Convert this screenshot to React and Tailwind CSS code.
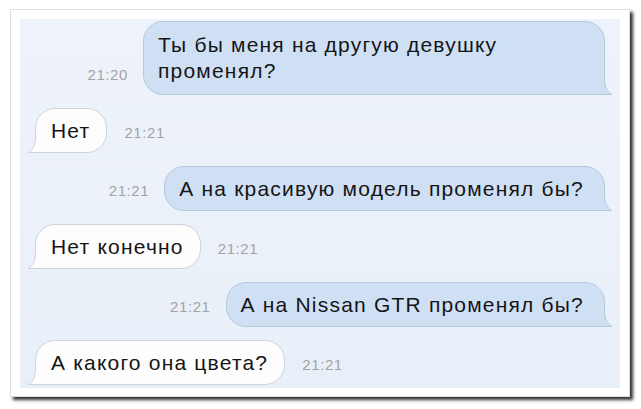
import React from 'react';

const messages = [
  { out: true, time: '21:20', lines: ['Ты бы меня на другую девушку', 'променял?'] },
  { out: false, time: '21:21', lines: ['Нет'] },
  { out: true, time: '21:21', lines: ['А на красивую модель променял бы?'] },
  { out: false, time: '21:21', lines: ['Нет конечно'] },
  { out: true, time: '21:21', lines: ['А на Nissan GTR променял бы?'] },
  { out: false, time: '21:21', lines: ['А какого она цвета?'] },
];

const Tail = ({ out }) =>
  out ? (
    <svg className="absolute -right-[9px] -bottom-px" width="16" height="16" viewBox="0 0 16 16">
      <path d="M0,0 H7.5 C7.5,8 10,13 15,15.5 H0 Z" fill="#cfe0f5" />
      <path d="M7.5,0 C7.5,8 10,13 15,15.5 H0" fill="none" stroke="#b6c8dd" />
    </svg>
  ) : (
    <svg className="absolute -left-[9px] -bottom-px" width="16" height="16" viewBox="0 0 16 16">
      <path d="M16,0 H8.5 C8.5,8 6,13 1,15.5 H16 Z" fill="#fdfdfd" />
      <path d="M8.5,0 C8.5,8 6,13 1,15.5 H16" fill="none" stroke="#cdd4dc" />
    </svg>
  );

const Bubble = ({ out, lines }) => {
  const multi = lines.length > 1;
  return (
    <div
      className={
        out
          ? `relative rounded-[20px] rounded-br-none border border-[#b6c8dd] bg-[#cfe0f5] pl-[14px] pr-[20px] text-[21px] tracking-[1.2px] text-[#151515] ${multi ? 'w-[462px] py-[10px] leading-[26px]' : 'py-[9px] leading-[25px]'}`
          : 'relative rounded-[20px] rounded-bl-none border border-[#cdd4dc] bg-[#fdfdfd] py-[9px] pl-[15px] pr-[16px] text-[21px] leading-[25px] tracking-[1.2px] text-[#151515]'
      }
    >
      {lines.map((l, i) => (
        <div key={i} className="whitespace-nowrap">{l}</div>
      ))}
      <Tail out={out} />
    </div>
  );
};

const Time = ({ t }) => (
  <span className="mb-[11px] text-[15px] leading-[18px] tracking-[0.6px] text-[#a3a3a3]">{t}</span>
);

export default function App() {
  return (
    <div className="h-[409px] w-[641px] bg-white pl-[10px] pt-[9px] font-['Liberation_Sans',Arial,sans-serif]">
      <div className="h-[388px] w-[620px] border border-[#dedede] bg-white p-[9px] pb-[8px] shadow-[3px_3px_3px_rgba(0,0,0,0.8)]">
        <div className="flex h-full flex-col gap-[13px] overflow-hidden bg-gradient-to-b from-[#eef3fb] to-[#e9eff8] pt-[2px]">
          {messages.map((m, i) =>
            m.out ? (
              <div key={i} className="flex items-end justify-end gap-[15px] pr-[15px]">
                <Time t={m.time} />
                <Bubble out lines={m.lines} />
              </div>
            ) : (
              <div key={i} className="flex items-end gap-[17px] pl-[15px]">
                <Bubble lines={m.lines} />
                <Time t={m.time} />
              </div>
            )
          )}
        </div>
      </div>
    </div>
  );
}
